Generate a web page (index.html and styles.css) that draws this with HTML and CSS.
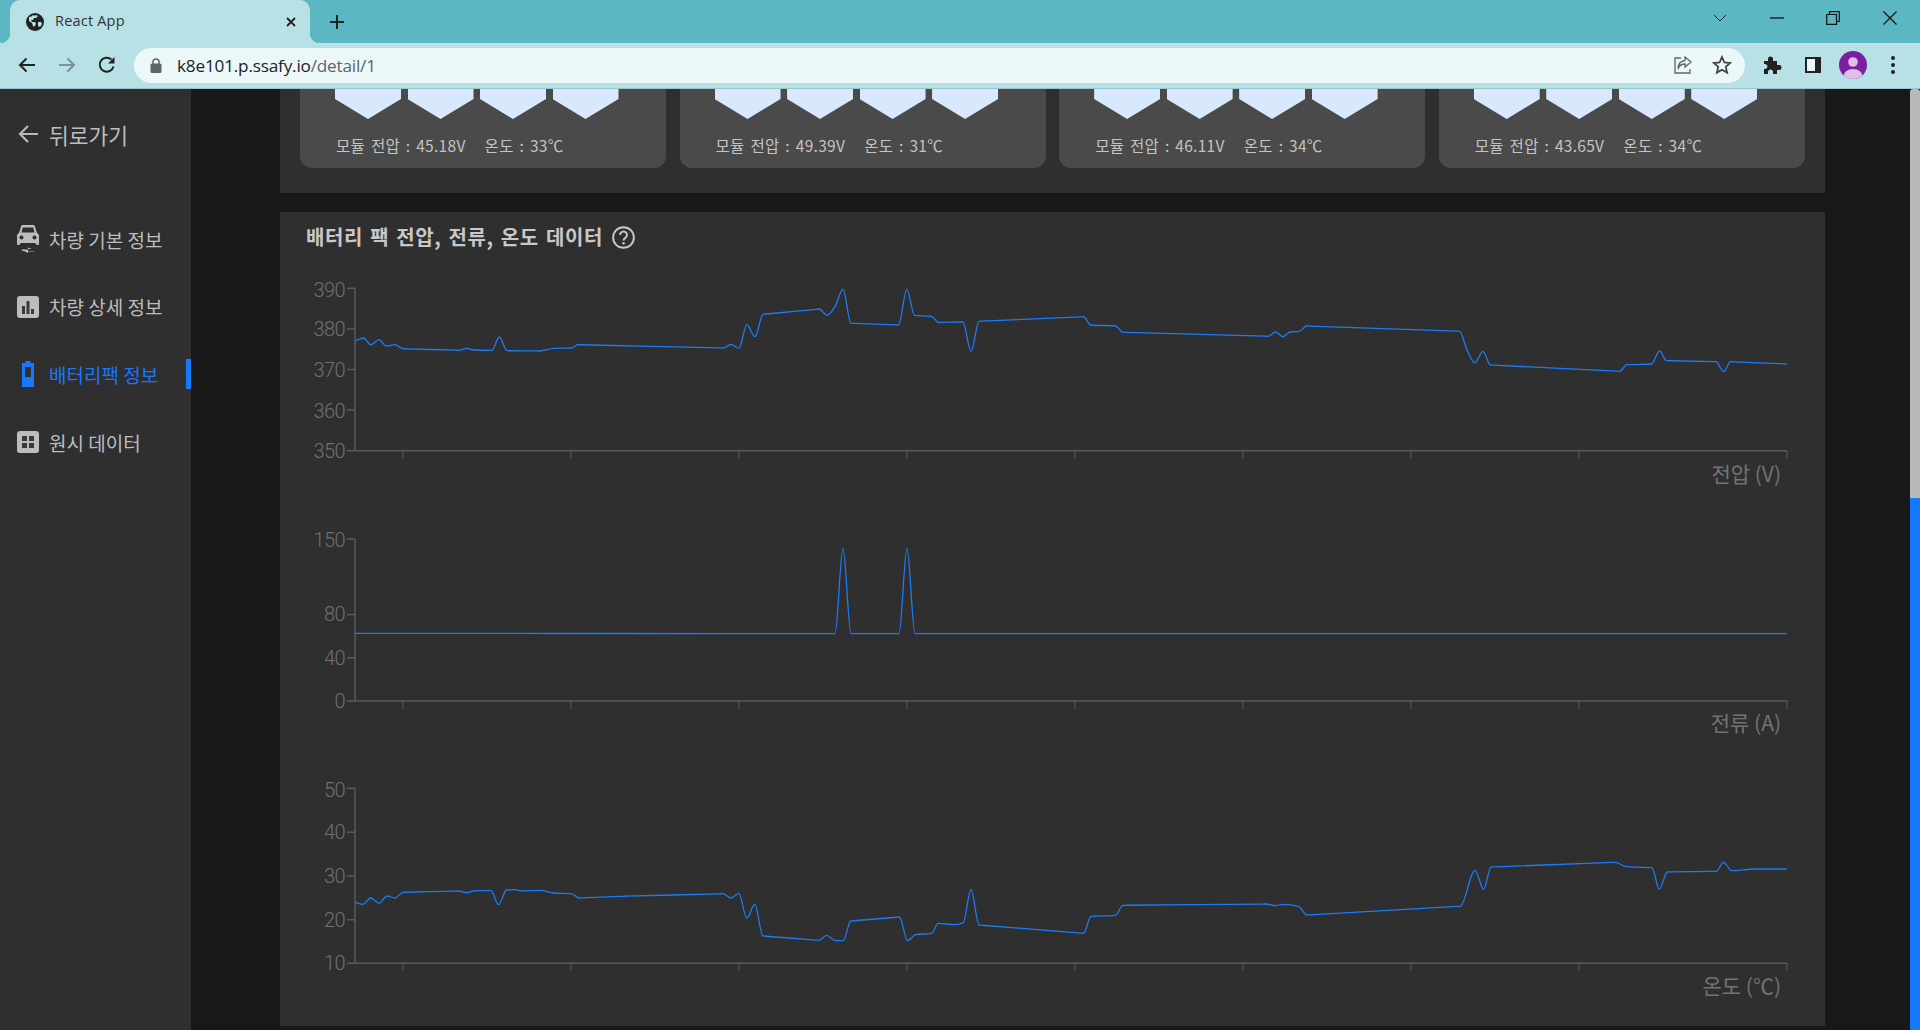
FILE: index.html
```html
<!DOCTYPE html>
<html>
<head>
  <meta charset='utf8'>
  <title>React App</title>
  <link rel="stylesheet" href="styles.css">
</head>
<body>
  <div class='tabstrip'>
    <div class='tab'>
      <svg class='favicon' viewBox='0 0 18 18'>
        <circle cx='9' cy='9' r='9' fill='#222'/>
        <path d='M3 4c2 0 3-1 4-2 1 1 2 1 3 0l2 1-2 2-2 0-1 2-2 0 1 2 3 0 1 2-2 3-1-1-1-3-3-2z' fill='#b8e1e5'/>
        <path d='M12 9l3 0 1 2-2 3-2-1z' fill='#b8e1e5'/>
      </svg>
      <span class='tab-title'>React App</span>
      <svg class='tab-close' viewBox='0 0 10 10'><path d='M1 1l8 8M9 1l-8 8' stroke='#222' stroke-width='1.8'/></svg>
    </div>
    <svg class='new-tab' viewBox='0 0 16 16'><path d='M8 1v14M1 8h14' stroke='#222' stroke-width='2'/></svg>
    <div class='win-controls'>
      <div class='win-btn'><svg width='14' height='8' viewBox='0 0 14 8'><path d='M1 1l6 6 6-6' fill='none' stroke='#222'/></svg></div>
      <div class='win-btn'><svg width='14' height='2' viewBox='0 0 14 2'><path d='M0 1h14' stroke='#111' stroke-width='1.3'/></svg></div>
      <div class='win-btn'><svg width='14' height='14' viewBox='0 0 14 14'><path d='M.7 3.5h9.8v9.8H.7zM3.5 3.5V.7h9.8v9.8h-2.8' fill='none' stroke='#111' stroke-width='1.2'/></svg></div>
      <div class='win-btn'><svg width='14' height='14' viewBox='0 0 14 14'><path d='M.5.5l13 13M13.5.5l-13 13' stroke='#111' stroke-width='1.2'/></svg></div>
    </div>
  </div>

  <div class='toolbar'>
    <div class='tool-btn'><svg width='18' height='16' viewBox='0 0 18 16'><path d='M17 8H2M8.500 1.500L2 8l6.500 6.500' fill='none' stroke='#222' stroke-width='2'/></svg></div>
    <div class='tool-btn'><svg width='18' height='16' viewBox='0 0 18 16'><path d='M1 8h15M9.500 1.500L16 8l-6.500 6.500' fill='none' stroke='#7f9194' stroke-width='2'/></svg></div>
    <div class='tool-btn'><svg width='18' height='18' viewBox='0 0 18 18'><path d='M15.500 10.500A7 7 0 1 1 13.500 3.500' fill='none' stroke='#222' stroke-width='2'/><path d='M16.500 1v6.500H10z' fill='#222'/></svg></div>
    <div class='omnibox'>
      <svg class='lock' viewBox='0 0 12 15'><path d='M3 6V4a3 3 0 0 1 6 0v2' fill='none' stroke='#5f6368' stroke-width='1.5'/><rect x='.5' y='5.500' width='11' height='9.500' rx='1.500' fill='#5f6368'/></svg>
      <span class='url'>k8e101.p.ssafy.io<span class='url-path'>/detail/1</span></span>
      <svg class='omni-icon' viewBox='0 0 20 20'><path d='M8 3H2v15h15v-4' fill='none' stroke='#5f6368' stroke-width='1.3'/><path d='M12 2l6 5-6 5V9C8 9 6 11 5 14c0-5 3-8 7-8.500z' fill='none' stroke='#5f6368' stroke-width='1.3'/></svg>
      <svg class='omni-icon star' viewBox='0 0 20 20'><path d='M10 2l2.400 5.400 5.800.6-4.400 3.900 1.300 5.700L10 14.700l-5.100 2.900 1.300-5.700L1.800 8l5.800-.6z' fill='none' stroke='#444' stroke-width='1.800'/></svg>
    </div>
    <div class='tool-btn'><svg width='20' height='20' viewBox='0 0 20 20'><path d='M1 6h4V4a2.500 2.500 0 0 1 5 0v2h4v4h2a2.500 2.500 0 0 1 0 5h-2v4h-4v-2a2.500 2.500 0 0 0-5 0v2H1v-5h1a2.500 2.500 0 0 0 0-5H1z' fill='#222'/></svg></div>
    <div class='tool-btn'><svg width='18' height='18' viewBox='0 0 18 18'><rect x='1' y='1' width='16' height='16' fill='#222'/><rect x='3' y='3' width='8' height='12' fill='#eaf7f8'/></svg></div>
    <div class='tool-btn'>
      <svg width='28' height='28' viewBox='0 0 28 28'>
        <defs><clipPath id='avatar-clip'><circle cx='14' cy='14' r='14'/></clipPath></defs>
        <circle cx='14' cy='14' r='14' fill='#7b1fa2'/>
        <circle cx='14' cy='11' r='4.800' fill='#e1bee7'/>
        <ellipse cx='14' cy='25' rx='9.500' ry='7' fill='#e1bee7' clip-path='url(#avatar-clip)'/>
      </svg>
    </div>
    <div class='tool-btn'><svg width='4' height='18' viewBox='0 0 4 18'><circle cx='2' cy='2' r='2' fill='#222'/><circle cx='2' cy='9' r='2' fill='#222'/><circle cx='2' cy='16' r='2' fill='#222'/></svg></div>
  </div>

  <div class='app'>
    <nav class='sidebar'>
      <div class='back-link'>
        <svg class='back-arrow' viewBox='0 0 20 20'><path d='M20 10H2M10 2l-8 8 8 8' fill='none' stroke='#b8b8b8' stroke-width='2.200'/></svg>
        <span>뒤로가기</span>
      </div>
      <div class='nav-item first'>
        <svg class='nav-icon' viewBox='0 0 22 28'>
          <path d='M2 8L4 1.500C4.300.6 5 0 6 0h10c1 0 1.700.6 2 1.500L20 8c1.200.5 2 1.500 2 3v8c0 .6-.4 1-1 1h-1l-2-2H4l-2 2H1c-.6 0-1-.4-1-1v-8c0-1.500.8-2.500 2-3z' fill='#bdbdbd'/>
          <path d='M4.500 7.500L5.800 2.500h10.400l1.300 5z' fill='#2f2f2f'/>
          <circle cx='4.500' cy='12.500' r='2' fill='#2f2f2f'/><circle cx='17.500' cy='12.500' r='2' fill='#2f2f2f'/>
          <path d='M5 24.500h6v-2l4 1.500H11v2H17v.5H11v1.500l-4-2H5z' fill='#bdbdbd'/>
        </svg>
        <span>차량 기본 정보</span>
      </div>
      <div class='nav-item'>
        <svg class='nav-icon' viewBox='0 0 22 22'>
          <rect width='22' height='22' rx='3' fill='#bdbdbd'/>
          <path d='M5 10h3v8H5zM9.500 5h3v13h-3zM14 13h3v5h-3z' fill='#3a3a3a'/>
        </svg>
        <span>차량 상세 정보</span>
      </div>
      <div class='nav-item active'>
        <svg class='nav-icon' viewBox='0 0 22 26'>
          <path d='M8.500 0h5v2H17v24H5V2h3.500z' fill='#1677ff'/>
          <rect x='8' y='6' width='6' height='10' fill='#2f2f2f'/>
        </svg>
        <span>배터리팩 정보</span>
      </div>
      <div class='nav-item'>
        <svg class='nav-icon' viewBox='0 0 22 22'>
          <rect width='22' height='22' rx='3' fill='#bdbdbd'/>
          <path d='M5 5h5v5H5zM12 5h5v5h-5zM5 12h5v5H5zM12 12h5v5h-5z' fill='#3a3a3a'/>
        </svg>
        <span>원시 데이터</span>
      </div>
    </nav>

    <main class='content'>
      <section class='panel module-panel'>
        <div class='module-card'>
          <div class='cells'><i></i><i></i><i></i><i></i></div>
          <p class='module-text'>모듈 전압 : 45.18V<span class='temp'>온도 : 33℃</span></p>
        </div>
        <div class='module-card'>
          <div class='cells'><i></i><i></i><i></i><i></i></div>
          <p class='module-text'>모듈 전압 : 49.39V<span class='temp'>온도 : 31℃</span></p>
        </div>
        <div class='module-card'>
          <div class='cells'><i></i><i></i><i></i><i></i></div>
          <p class='module-text'>모듈 전압 : 46.11V<span class='temp'>온도 : 34℃</span></p>
        </div>
        <div class='module-card'>
          <div class='cells'><i></i><i></i><i></i><i></i></div>
          <p class='module-text'>모듈 전압 : 43.65V<span class='temp'>온도 : 34℃</span></p>
        </div>
      </section>

      <section class='panel chart-panel'>
        <h2 class='chart-title'>배터리 팩 전압, 전류, 온도 데이터
          <svg class='help' viewBox='0 0 20 20'><circle cx='10' cy='10' r='9' fill='none' stroke='#c8c8c8' stroke-width='1.700'/><path d='M7 7.800a3 3 0 1 1 4.600 2.500c-1 .7-1.600 1.200-1.600 2.400' fill='none' stroke='#c8c8c8' stroke-width='1.700'/><circle cx='10' cy='15' r='1.100' fill='#c8c8c8'/></svg>
        </h2>

        <svg class='chart' viewBox='280 270 1545 250'>
          <path class='axis' d='M355 288.300V450.700H1787M347 288.300h8M347 329h8M347 369.600h8M347 410h8M347 450.700h8'/>
          <path class='tick' d='M403 451v8M571 451v8M739 451v8M907 451v8M1075 451v8M1243 451v8M1411 451v8M1579 451v8M1787 451v8'/>
          <text class='y-label' x='345' y='297'>390</text>
          <text class='y-label' x='345' y='336'>380</text>
          <text class='y-label' x='345' y='377'>370</text>
          <text class='y-label' x='345' y='418'>360</text>
          <text class='y-label' x='345' y='458'>350</text>
          <text class='unit-label' x='1781' y='482'>전압 (V)</text>
          <path class='line' id='line-voltage'/>
        </svg>

        <svg class='chart' viewBox='280 520 1545 250'>
          <path class='axis' d='M355 539V701H1787M347 539h8M347 614.600h8M347 657.800h8M347 701h8'/>
          <path class='tick' d='M403 701v8M571 701v8M739 701v8M907 701v8M1075 701v8M1243 701v8M1411 701v8M1579 701v8M1787 701v8'/>
          <text class='y-label' x='345' y='547'>150</text>
          <text class='y-label' x='345' y='621'>80</text>
          <text class='y-label' x='345' y='665'>40</text>
          <text class='y-label' x='345' y='708'>0</text>
          <text class='unit-label' x='1781' y='731'>전류 (A)</text>
          <path class='line' id='line-current'/>
        </svg>

        <svg class='chart' viewBox='280 770 1545 250'>
          <path class='axis' d='M355 788.300V963.300H1787M347 788.300h8M347 832.300h8M347 876h8M347 919.700h8M347 963.300h8'/>
          <path class='tick' d='M403 963v8M571 963v8M739 963v8M907 963v8M1075 963v8M1243 963v8M1411 963v8M1579 963v8M1787 963v8'/>
          <text class='y-label' x='345' y='797'>50</text>
          <text class='y-label' x='345' y='839'>40</text>
          <text class='y-label' x='345' y='883'>30</text>
          <text class='y-label' x='345' y='927'>20</text>
          <text class='y-label' x='345' y='970'>10</text>
          <text class='unit-label' x='1781' y='994'>온도 (℃)</text>
          <path class='line' id='line-temp'/>
        </svg>
      </section>
    </main>

    <div class='scrollbar'><div class='thumb'></div><div class='track-fill'></div></div>
  </div>

  <script src='chart.js'></script>
</body>
</html>
```

FILE: styles.css
```css
html, body {
  margin: 0;
  padding: 0;
  height: 100%;
  overflow: hidden;
}
body {
  background: #181818;
  font-family: "Noto Sans CJK KR", "Noto Sans", sans-serif;
}

/* browser chrome */
.tabstrip {
  display: flex;
  align-items: center;
  height: 43px;
  background: #5bb8c2;
}
.tab {
  position: relative;
  box-sizing: border-box;
  display: flex;
  align-items: center;
  align-self: stretch;
  width: 300px;
  margin-left: 10px;
  padding: 0 14px 0 16px;
  background: #b8e1e5;
  border-radius: 10px 10px 0 0;
}
.tab::before, .tab::after {
  content: '';
  position: absolute;
  bottom: 0;
  width: 10px;
  height: 10px;
}
.tab::before {
  left: -10px;
  background: radial-gradient(circle at 0 0, transparent 10px, #b8e1e5 10.500px);
}
.tab::after {
  right: -10px;
  background: radial-gradient(circle at 100% 0, transparent 10px, #b8e1e5 10.500px);
}
.favicon {
  width: 18px;
  height: 18px;
}
.tab-title {
  flex: 1;
  margin: 0 0 2px 11px;
  font: 14.500px "Open Sans", sans-serif;
  letter-spacing: .2px;
  color: #333;
}
.tab-close {
  width: 10px;
  height: 10px;
}
.new-tab {
  width: 16px;
  height: 16px;
  margin-left: 19px;
}
.win-controls {
  display: flex;
  margin-left: auto;
  margin-bottom: 7px;
  padding-right: 2px;
}
.win-btn {
  display: flex;
  align-items: center;
  justify-content: center;
  width: 56.500px;
  height: 30px;
}

.toolbar {
  box-sizing: border-box;
  display: flex;
  align-items: center;
  height: 46px;
  padding: 0 7px 1px 7px;
  background: #b8e1e5;
  border-bottom: 1px solid #9cc3c7;
}
.tool-btn {
  display: flex;
  align-items: center;
  justify-content: center;
  width: 40px;
  height: 35px;
}
.omnibox {
  display: flex;
  align-items: center;
  flex: 1;
  height: 35px;
  margin: 0 8px 0 7px;
  padding: 0 13px 0 16px;
  background: #ecf8f8;
  border-radius: 18px;
}
.lock {
  width: 12px;
  height: 15px;
}
.url {
  flex: 1;
  margin-left: 15px;
  font: 17.200px "Open Sans", sans-serif;
  letter-spacing: -.2px;
  color: #222;
}
.url-path {
  color: #5f6368;
}
.omni-icon {
  width: 20px;
  height: 20px;
}
.star {
  margin-left: 19px;
}

/* page */
.app {
  display: flex;
  height: 941px;
  overflow: hidden;
}
.sidebar {
  display: flex;
  flex-direction: column;
  flex: none;
  width: 191px;
  padding-top: 30px;
  background: #2f2f2f;
  color: #bdbdbd;
  font-size: 19px;
}
.back-link {
  display: flex;
  align-items: center;
  height: 30px;
  padding-left: 18px;
  font-size: 21.500px;
}
.back-arrow {
  width: 20px;
  height: 20px;
  margin-right: 11px;
}
.nav-item {
  box-sizing: border-box;
  display: flex;
  align-items: center;
  height: 30px;
  margin-top: 37.700px;
}
.nav-item.first {
  margin-top: 75px;
}
.nav-item.active {
  color: #1677ff;
  border-right: 5px solid #1677ff;
}
.nav-icon {
  flex: none;
  width: 22px;
  height: 28px;
  margin: 0 10px 0 17px;
}

.content {
  flex: 1;
  min-width: 0;
  padding: 0 85px 0 89px;
}
.panel {
  background: #2f2f2f;
}
.module-panel {
  display: grid;
  grid-template-columns: repeat(4, 1fr);
  gap: 13.300px;
  padding: 0 20px 25px;
}
.module-card {
  padding: 0 35px 13px;
  background: #4a4a4a;
  border-radius: 0 0 12px 12px;
}
.cells {
  display: flex;
  gap: 6.500px;
}
.cells i {
  display: block;
  flex: none;
  width: 66px;
  height: 30px;
  background: #d8e8fd;
  clip-path: polygon(0 0, 100% 0, 100% 33%, 50% 100%, 0 33%);
}
.module-text {
  margin: 16px 0 0 1px;
  font-size: 15.500px;
  line-height: 20px;
  letter-spacing: .3px;
  word-spacing: 2px;
  color: #c4c4c4;
  white-space: nowrap;
}
.temp {
  margin-left: 19px;
}

.chart-panel {
  margin-top: 19px;
  padding: 12px 0 6px;
}
.chart-title {
  display: flex;
  align-items: center;
  margin: 0 0 20px 26px;
  font-size: 20px;
  font-weight: 700;
  line-height: 26px;
  letter-spacing: .6px;
  word-spacing: 2px;
  color: #c8c8c8;
}
.help {
  width: 23px;
  height: 23px;
  margin-left: 9px;
}
.chart {
  display: block;
  width: 1545px;
  height: 250px;
}
.axis {
  fill: none;
  stroke: #5a5a5a;
  stroke-width: 1.500;
}
.tick {
  fill: none;
  stroke: #5e5e5e;
  stroke-width: 1;
}
.line {
  fill: none;
  stroke: #1a7cf8;
  stroke-width: 1.300;
}
.y-label {
  font-family: Roboto, sans-serif;
  font-size: 20px;
  font-weight: 300;
  letter-spacing: -.6px;
  fill: #707070;
  text-anchor: end;
}
.unit-label {
  font-size: 21px;
  fill: #737373;
  text-anchor: end;
}

.scrollbar {
  display: flex;
  flex-direction: column;
  flex: none;
  width: 10px;
}
.thumb {
  height: 409px;
  background: #b9b9b9;
  border-radius: 3px 3px 0 0;
}
.track-fill {
  flex: 1;
  background: #1677ff;
}
```

FILE: chart.js
```js
var voltage = [[355,341],[363.6,338],[370.7,344.7],[379,339.7],[386.4,346],[395,344.7],[403,348.7],[459,350.3],[466.4,348.3],[473.6,350],[491.8,350.3],[499.3,337],[507,350.7],[539.6,351],[554,348.3],[571.8,348],[578,344.7],[723.6,348],[730.7,344.3],[739,348.3],[746.8,324.7],[755,336.7],[763,314.3],[819.3,309],[827,315.3],[835,306.7],[843,289.3],[851,323.3],[898.6,325],[906.8,289.3],[914.6,315.3],[931.4,316.3],[938.6,322.3],[962.9,322],[971,351.3],[979,321.3],[1083.6,316.7],[1090.7,325],[1115.7,326],[1122.9,332.3],[1268.2,336.3],[1275.4,332],[1283,336.7],[1290,332],[1299.6,331.3],[1306.5,326],[1459.6,331.3],[1467,350],[1475,362.7],[1482.9,351.3],[1490.6,365],[1619.6,371.3],[1627,364.7],[1651.4,364],[1659.6,351],[1666.5,360.7],[1716,361.7],[1723.7,371.7],[1730.6,361.7],[1787,364]];

var current = [[355,633.3],[835,633.7],[843,548.3],[851,633.7],[899,633.7],[907,548.3],[915,633.7],[1787,633.7]];

var temp = [[355,902.3],[362.9,904.3],[370.9,898],[379,903.3],[387,896],[395,898],[403,892.3],[457.5,891],[467.3,892.7],[475.4,890.7],[491,890.7],[498.6,904.7],[506.6,890],[515.5,889.7],[522,891],[540,890.3],[553.5,893],[571.3,893.7],[579,898],[622.7,896.3],[723,893.7],[730.7,898],[738.8,893.3],[746.8,918],[754.8,904.3],[762.9,936],[819,940.3],[826.7,935.3],[834.7,940.3],[843.2,940.7],[850.8,921],[899.5,917],[907.5,940.7],[915.5,934.7],[931.6,933.3],[938.3,923.3],[955.3,924.7],[963.3,922.7],[971,889.3],[979,925],[1083.7,933.3],[1091,916.3],[1115.5,915.3],[1122.9,905.3],[1266.2,904],[1275.4,905.7],[1282.7,904.3],[1298.6,906.3],[1306.6,915],[1460.3,906.3],[1475,870.3],[1483.6,889.3],[1491,867],[1615.2,862.3],[1626.3,866.7],[1652,867.7],[1659.3,889.3],[1667.3,872],[1716.3,871.3],[1723.6,862.3],[1731.6,870.7],[1756,869],[1787,869]];

// long stretches have to stay straight, so pin them near both ends
function pinLongSegments(pts) {
  var out = [pts[0]];
  for (var i = 1; i < pts.length; i++) {
    var a = pts[i - 1];
    var b = pts[i];
    var len = b[0] - a[0];
    if (len > 25) {
      var t = 3 / len;
      out.push([a[0] + 3, a[1] + (b[1] - a[1]) * t]);
      out.push([b[0] - 3, b[1] - (b[1] - a[1]) * t]);
    }
    out.push(b);
  }
  return out;
}

// same curve as a monotone line chart
function monotonePath(input) {
  var pts = pinLongSegments(input);
  var n = pts.length;
  var slopes = [];
  var tangents = [];
  for (var i = 0; i < n - 1; i++) {
    slopes.push((pts[i + 1][1] - pts[i][1]) / (pts[i + 1][0] - pts[i][0]));
  }
  for (var j = 1; j < n - 1; j++) {
    var h0 = pts[j][0] - pts[j - 1][0];
    var h1 = pts[j + 1][0] - pts[j][0];
    var s0 = slopes[j - 1];
    var s1 = slopes[j];
    var p = (s0 * h1 + s1 * h0) / (h0 + h1);
    tangents[j] = (Math.sign(s0) + Math.sign(s1)) * Math.min(Math.abs(s0), Math.abs(s1), 0.5 * Math.abs(p));
  }
  tangents[0] = slopes[0];
  tangents[n - 1] = slopes[n - 2];
  var d = 'M' + pts[0][0] + ' ' + pts[0][1];
  for (var k = 0; k < n - 1; k++) {
    var dx = (pts[k + 1][0] - pts[k][0]) / 3;
    d += 'C' + (pts[k][0] + dx) + ' ' + (pts[k][1] + dx * tangents[k]) + ' ' +
      (pts[k + 1][0] - dx) + ' ' + (pts[k + 1][1] - dx * tangents[k + 1]) + ' ' +
      pts[k + 1][0] + ' ' + pts[k + 1][1];
  }
  return d;
}

document.getElementById('line-voltage').setAttribute('d', monotonePath(voltage));
document.getElementById('line-current').setAttribute('d', monotonePath(current));
document.getElementById('line-temp').setAttribute('d', monotonePath(temp));
```
